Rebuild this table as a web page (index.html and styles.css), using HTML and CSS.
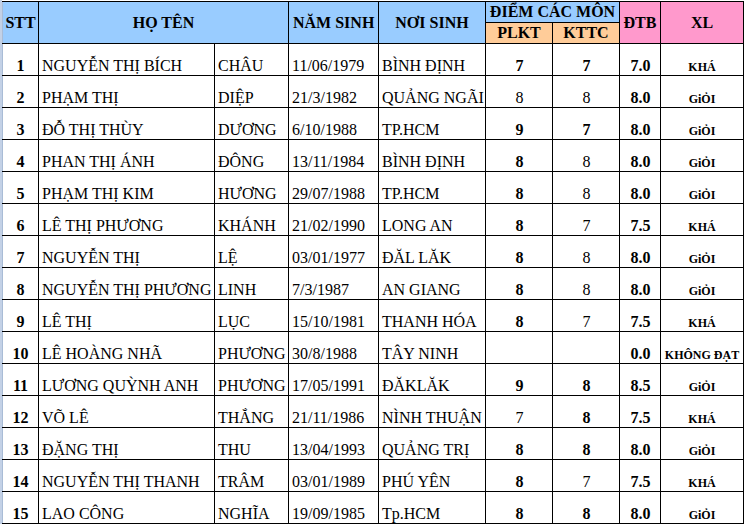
FILE: index.html
```html
<!DOCTYPE html>
<html lang="vi">
<head>
<meta charset="utf-8">
<title>Danh sách</title>
<link rel="stylesheet" href="styles.css">
</head>
<body>
<div class="sheet">
<table class="grid">
<colgroup>
<col class="c-stt"><col class="c-ho"><col class="c-ten"><col class="c-ns"><col class="c-noi"><col class="c-m"><col class="c-m"><col class="c-dtb"><col class="c-xl">
</colgroup>
<thead>
<tr class="h1">
<th rowspan="2" class="blue">STT</th>
<th rowspan="2" colspan="2" class="blue">HỌ TÊN</th>
<th rowspan="2" class="blue ns">NĂM SINH</th>
<th rowspan="2" class="blue">NƠI SINH</th>
<th colspan="2" class="blue">ĐIỂM CÁC MÔN</th>
<th rowspan="2" class="pink">ĐTB</th>
<th rowspan="2" class="pink">XL</th>
</tr>
<tr class="h2">
<th class="peach">PLKT</th>
<th class="peach">KTTC</th>
</tr>
</thead>
<tbody>
<tr><td class="stt">1</td><td>NGUYỄN THỊ BÍCH</td><td>CHÂU</td><td>11/06/1979</td><td>BÌNH ĐỊNH</td><td class="num b">7</td><td class="num b">7</td><td class="num b">7.0</td><td class="xl">KHÁ</td></tr>
<tr><td class="stt">2</td><td>PHẠM THỊ</td><td>DIỆP</td><td>21/3/1982</td><td>QUẢNG NGÃI</td><td class="num">8</td><td class="num">8</td><td class="num b">8.0</td><td class="xl">GiỎI</td></tr>
<tr><td class="stt">3</td><td>ĐỖ THỊ THÙY</td><td>DƯƠNG</td><td>6/10/1988</td><td>TP.HCM</td><td class="num b">9</td><td class="num b">7</td><td class="num b">8.0</td><td class="xl">GiỎI</td></tr>
<tr><td class="stt">4</td><td>PHAN THỊ ÁNH</td><td>ĐÔNG</td><td>13/11/1984</td><td>BÌNH ĐỊNH</td><td class="num b">8</td><td class="num">8</td><td class="num b">8.0</td><td class="xl">GiỎI</td></tr>
<tr><td class="stt">5</td><td>PHẠM THỊ KIM</td><td>HƯƠNG</td><td>29/07/1988</td><td>TP.HCM</td><td class="num b">8</td><td class="num">8</td><td class="num b">8.0</td><td class="xl">GiỎI</td></tr>
<tr><td class="stt">6</td><td>LÊ THỊ PHƯƠNG</td><td>KHÁNH</td><td>21/02/1990</td><td>LONG AN</td><td class="num b">8</td><td class="num">7</td><td class="num b">7.5</td><td class="xl">KHÁ</td></tr>
<tr><td class="stt">7</td><td>NGUYỄN THỊ</td><td>LỆ</td><td>03/01/1977</td><td>ĐĂL LĂK</td><td class="num b">8</td><td class="num">8</td><td class="num b">8.0</td><td class="xl">GiỎI</td></tr>
<tr><td class="stt">8</td><td>NGUYỄN THỊ PHƯƠNG</td><td>LINH</td><td>7/3/1987</td><td>AN GIANG</td><td class="num b">8</td><td class="num">8</td><td class="num b">8.0</td><td class="xl">GiỎI</td></tr>
<tr><td class="stt">9</td><td>LÊ THỊ</td><td>LỤC</td><td>15/10/1981</td><td>THANH HÓA</td><td class="num b">8</td><td class="num">7</td><td class="num b">7.5</td><td class="xl">KHÁ</td></tr>
<tr><td class="stt">10</td><td>LÊ HOÀNG NHÃ</td><td>PHƯƠNG</td><td>30/8/1988</td><td>TÂY NINH</td><td class="num"></td><td class="num"></td><td class="num b">0.0</td><td class="xl">KHÔNG ĐẠT</td></tr>
<tr><td class="stt">11</td><td>LƯƠNG QUỲNH ANH</td><td>PHƯƠNG</td><td>17/05/1991</td><td>ĐĂKLĂK</td><td class="num b">9</td><td class="num b">8</td><td class="num b">8.5</td><td class="xl">GiỎI</td></tr>
<tr><td class="stt">12</td><td>VÕ LÊ</td><td>THẮNG</td><td>21/11/1986</td><td>NÌNH THUẬN</td><td class="num">7</td><td class="num b">8</td><td class="num b">7.5</td><td class="xl">KHÁ</td></tr>
<tr><td class="stt">13</td><td>ĐẶNG THỊ</td><td>THU</td><td>13/04/1993</td><td>QUẢNG TRỊ</td><td class="num b">8</td><td class="num b">8</td><td class="num b">8.0</td><td class="xl">GiỎI</td></tr>
<tr><td class="stt">14</td><td>NGUYỄN THỊ THANH</td><td>TRÂM</td><td>03/01/1989</td><td>PHÚ YÊN</td><td class="num b">8</td><td class="num">7</td><td class="num b">7.5</td><td class="xl">KHÁ</td></tr>
<tr><td class="stt">15</td><td>LAO CÔNG</td><td>NGHĨA</td><td>19/09/1985</td><td>Tp.HCM</td><td class="num b">8</td><td class="num b">8</td><td class="num b">8.0</td><td class="xl">GiỎI</td></tr>
</tbody>
</table>
</div>
</body>
</html>
```
FILE: styles.css
```css
html, body {
  margin: 0;
  padding: 0;
  background: #ffffff;
}
.sheet {
  padding-top: 1px;
  border-left: 2px solid #c3d1e6;
  width: 742px;
}
.grid {
  border-collapse: collapse;
  table-layout: fixed;
  width: 742px;
  font-family: "Liberation Serif", "Times New Roman", serif;
  font-size: 16px;
  color: #000;
}
.c-stt { width: 36px; }
.c-ho { width: 176px; }
.c-ten { width: 74px; }
.c-ns { width: 90px; }
.c-noi { width: 107px; }
.c-m { width: 67px; }
.c-dtb { width: 41px; }
.c-xl { width: 83px; }
.grid th, .grid td {
  border: 1px solid #000;
  padding: 0;
  overflow: visible;
  white-space: nowrap;
}
.grid th {
  font-weight: bold;
  text-align: center;
  vertical-align: middle;
  line-height: 18px;
}
.grid thead tr:first-child th:first-child {
  border-left-color: #a9bcd6;
}
.h1, .h2 { height: 21px; }
.blue { background: #99ccff; }
.peach { background: #ffcc99; }
.pink { background: #ff99cc; }
.grid th.ns { text-align: left; padding-left: 4px; }
.grid tbody tr { height: 32px; }
.grid td {
  vertical-align: bottom;
  padding: 0 2px 0 3px;
  line-height: 18px;
  text-align: left;
}
.grid tbody td:first-child { border-left-color: #a9bcd6; }
.grid td.stt { text-align: center; font-weight: bold; padding-left: 2px; }
.grid td.num { text-align: center; }
.grid td.b { font-weight: bold; }
.grid td.xl {
  text-align: center;
  font-weight: bold;
  font-size: 12px;
  padding: 0 0 1px 0;
  line-height: 14px;
}
```
